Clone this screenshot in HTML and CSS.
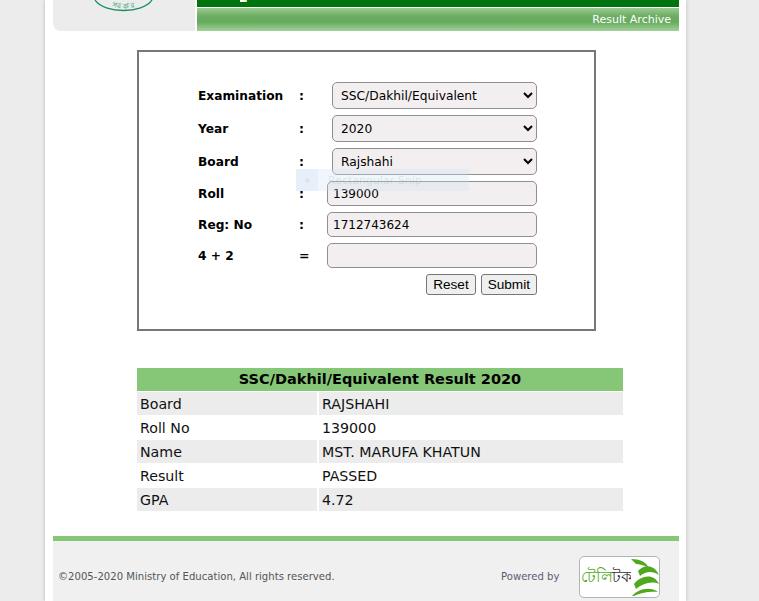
FILE: index.html
```html
<!DOCTYPE html>
<html lang="en">
<head>
<meta charset="utf-8">
<title>Result Archive</title>
<link rel="stylesheet" href="styles.css">
</head>
<body>
<div class="page">
  <header class="header">
    <div class="logo-box">
      <svg class="seal" width="70" height="12" viewBox="0 0 70 12" aria-hidden="true">
        <defs><path id="seal-arc" d="M6 1 C17 11 44 11 55 1"/></defs>
        <path d="M2 0 C11 14 50 14 59 0" fill="none" stroke="#12905c" stroke-width="1.3"/>
        <text class="seal-text"><textPath href="#seal-arc" startOffset="50%" text-anchor="middle">সরকার</textPath></text>
      </svg>
    </div>
    <div class="banner">
      <div class="banner-top"><span class="banner-mark"></span></div>
      <div class="banner-nav">Result Archive</div>
    </div>
  </header>

  <main class="content">
    <form class="search-box">
      <div class="form-grid">
        <label class="lbl">Examination</label><span class="sep">:</span>
        <select class="field select"><option>SSC/Dakhil/Equivalent</option></select>
        <label class="lbl">Year</label><span class="sep">:</span>
        <select class="field select"><option>2020</option></select>
        <label class="lbl">Board</label><span class="sep">:</span>
        <select class="field select"><option>Rajshahi</option></select>
        <label class="lbl">Roll</label><span class="sep">:</span>
        <input class="field input" value="139000">
        <label class="lbl">Reg: No</label><span class="sep">:</span>
        <input class="field input" value="1712743624">
        <label class="lbl">4 + 2</label><span class="sep">=</span>
        <input class="field input" value="">
        <div class="actions">
          <button type="button" class="btn">Reset</button>
          <button type="button" class="btn">Submit</button>
        </div>
      </div>
      <div class="snip"><span class="snip-icon"><i></i></span><span class="snip-text">Rectangular Snip</span></div>
    </form>

    <table class="result">
      <colgroup><col class="col-key"><col></colgroup>
      <thead><tr><th colspan="2">SSC/Dakhil/Equivalent Result 2020</th></tr></thead>
      <tbody>
        <tr><td class="key">Board</td><td>RAJSHAHI</td></tr>
        <tr><td class="key">Roll No</td><td>139000</td></tr>
        <tr><td class="key">Name</td><td>MST. MARUFA KHATUN</td></tr>
        <tr><td class="key">Result</td><td>PASSED</td></tr>
        <tr><td class="key">GPA</td><td>4.72</td></tr>
      </tbody>
    </table>
  </main>

  <footer class="footer">
    <span class="copy">©2005-2020 Ministry of Education, All rights reserved.</span>
    <span class="powered">Powered by</span>
    <div class="tt-logo">
      <span class="tt-word"><span class="tt-green">টেলি</span><span class="tt-dark">টক</span></span>
      <svg class="tt-swoosh" width="28" height="38" viewBox="0 0 28 38" aria-hidden="true">
        <path d="M0 1 C9 1 15 4 18 10 C13 7 8 6 5 6 Z" fill="#4fa81e"/>
        <path d="M7 13 C13 6 23 6 28 17 C22 13 15 13 9 18 Z" fill="#4fa81e"/>
        <path d="M3 26 C10 17 23 15 28 26 C21 23 12 25 5 31 Z" fill="#4fa81e"/>
        <path d="M1 38 C7 31 19 28 27 34 C18 33 9 35 3 38 Z" fill="#4fa81e"/>
      </svg>
    </div>
  </footer>
</div>
</body>
</html>
```

FILE: styles.css
```css
* { box-sizing: border-box; }
html, body { margin: 0; height: 100%; overflow: hidden; }
body {
  background: #ececec;
  font-family: "DejaVu Sans", Verdana, sans-serif;
  color: #000;
}
.page {
  width: 641px;
  height: 601px;
  margin-left: 45px;
  padding: 0 7px 0 8px;
  background: #fff;
  box-shadow: 0 0 4px rgba(0, 0, 0, .22);
  display: flex;
  flex-direction: column;
}
.header { display: flex; gap: 2px; height: 31px; flex: none; }
.logo-box {
  width: 142px;
  background: #ececec;
  border-bottom-left-radius: 8px;
  overflow: hidden;
}
.seal { display: block; margin-left: 40px; }
.seal-text { font-family: "Noto Sans", "DejaVu Sans", sans-serif; font-size: 7px; letter-spacing: 1px; fill: #12905c; }
.banner { flex: 1; display: flex; flex-direction: column; }
.banner-top { height: 7px; background: #00750f; overflow: hidden; padding-left: 43px; }
.banner-mark { display: block; width: 7px; height: 2px; background: linear-gradient(90deg, #fff 60%, #e8d27a); }
.banner-nav {
  margin-top: 1px;
  height: 23px;
  background: linear-gradient(#9ccb92 0, #6cae63 35%, #66aa5e 60%, #a2d199 100%);
  color: #fff;
  font-size: 11px;
  line-height: 24px;
  text-align: right;
  padding-right: 8px;
}
.content { flex: 1; padding-left: 84px; }
.search-box {
  position: relative;
  width: 459px;
  height: 281px;
  margin-top: 19px;
  border: 2px solid #777;
  padding: 30px 0 0 59px;
}
.form-grid {
  display: grid;
  grid-template-columns: 101px 28px 210px;
  grid-template-rows: 27px 27px 27px 25px 25px 25px 21px;
  row-gap: 6px;
  align-items: center;
  width: 339px;
}
.lbl { font-size: 12.2px; font-weight: 700; }
.sep { font-size: 12.5px; font-weight: 700; }
.field {
  background: #f3eff0;
  border: 1px solid #8f8f8f;
  border-radius: 5px;
  font-family: "DejaVu Sans", Verdana, sans-serif;
  color: #000;
  height: 100%;
  outline: none;
}
.select { width: 205px; margin-left: 5px; padding-left: 4px; font-size: 12.25px; }
.input { width: 210px; padding: 0 5px; font-size: 12px; }
.actions {
  grid-column: 1 / -1;
  display: flex;
  justify-content: flex-end;
  gap: 5px;
  height: 21px;
}
.btn {
  height: 21px;
  padding: 0 6px;
  background: #efefef;
  border: 1px solid #767676;
  border-radius: 3px;
  font-family: "Liberation Sans", Arial, sans-serif;
  font-size: 13.6px;
  color: #000;
}
.snip {
  position: absolute;
  left: 157px;
  top: 117px;
  width: 173px;
  height: 22px;
  display: flex;
  align-items: center;
  background: rgba(205, 225, 245, .3);
  pointer-events: none;
}
.snip-icon { width: 22px; height: 22px; display: flex; align-items: center; justify-content: center; background: rgba(205, 225, 245, .25); }
.snip-icon i { display: block; width: 5px; height: 5px; border-radius: 50%; background: #dbe5ee; }
.snip-text { margin-left: 10px; font-size: 11px; color: rgba(120, 130, 140, .18); }
.result {
  width: 486px;
  margin-top: 37px;
  border-collapse: collapse;
  table-layout: fixed;
  font-size: 14.2px;
}
.col-key { width: 181px; }
.result th {
  height: 23px;
  padding: 0;
  background: #86c777;
  font-size: 14.5px;
  font-weight: 700;
  text-align: center;
}
.result td {
  height: 24px;
  padding: 1px 0 0 3px;
  border-top: 1px solid #fff;
  color: #111;
}
.result tbody tr:nth-child(odd) td { background: #ececec; }
.result .key { border-right: 2px solid #fff; }
.footer {
  flex: none;
  height: 65px;
  border-top: 5px solid #86c777;
  background: #f0f0f0;
  display: flex;
  align-items: flex-start;
  padding: 15px 0 0 5px;
  font-size: 10.1px;
  color: #555;
}
.copy { margin-top: 15px; width: 443px; }
.powered { margin-top: 15px; width: 78px; color: #5c5c70; }
.tt-logo {
  width: 81px;
  height: 42px;
  background: #fff;
  border: 1px solid #b3b3b3;
  border-radius: 5px;
  display: flex;
  align-items: center;
  padding-left: 1px;
  overflow: hidden;
}
.tt-word { flex: none; width: 50px; font-family: "Noto Sans", "DejaVu Sans", sans-serif; font-size: 16px; font-weight: 500; letter-spacing: -.5px; white-space: nowrap; overflow: hidden; }
.tt-green { color: #4fa81e; }
.tt-dark { color: #333; }
.tt-swoosh { flex: none; }
```
